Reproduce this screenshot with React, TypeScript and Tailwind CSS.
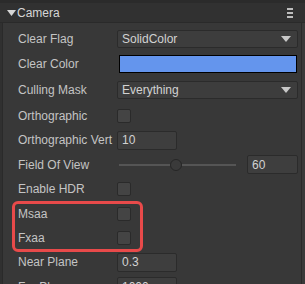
import React from 'react'

const font = { fontFamily: '"Liberation Sans", Arial, sans-serif' }

function Label({ children }: { children: React.ReactNode }) {
  return <div className="w-[99px] shrink-0 text-[12px] text-[#c4c4c4] whitespace-nowrap">{children}</div>
}

function Row({ h, label, children }: { h: string; label: string; children?: React.ReactNode }) {
  return (
    <div className={`flex items-center ${h}`}>
      <Label>{label}</Label>
      {children}
    </div>
  )
}

function Caret() {
  return (
    <svg width="10" height="6" viewBox="0 0 10 6" className="ml-auto">
      <path d="M0 0 L10 0 L5 6 Z" fill="#c8c8c8" />
    </svg>
  )
}

function Select({ value }: { value: string }) {
  return (
    <div className="flex items-center w-[181px] h-[18px] pl-[4px] pr-[6px] bg-[#3d3d3d] border border-[#2b2b2b] rounded-[2px] text-[12px] text-[#d2d2d2]">
      <span>{value}</span>
      <Caret />
    </div>
  )
}

function Check() {
  return <div className="w-[14px] h-[14px] bg-[#444444] border border-[#2a2a2a] rounded-[2px]" />
}

function NumInput({ value, w }: { value: string; w: string }) {
  return (
    <div className={`flex items-center ${w} h-[19px] pl-[4px] bg-[#3e3e3e] border border-[#2b2b2b] rounded-[2px] text-[12px] text-[#d2d2d2]`}>
      {value}
    </div>
  )
}

export default function App() {
  return (
    <div className="w-[305px] h-[284px] overflow-hidden bg-[#383838] flex flex-col" style={font}>
      {/* top strip */}
      <div className="h-[3px] bg-[#2b2b2b] shrink-0" />
      {/* header */}
      <div className="h-[20px] shrink-0 flex items-center bg-[#313131] border-b border-[#2a2a2a] pl-[7px] pr-[12px]">
        <svg width="9" height="6" viewBox="0 0 9 6" className="mr-[1px]">
          <path d="M0 0 L9 0 L4.5 6 Z" fill="#d6d6d6" />
        </svg>
        <span className="text-[12px] text-[#d6d6d6]">Camera</span>
        <div className="ml-auto flex flex-col gap-[2px]">
          <div className="w-[6px] h-[2px] bg-[#bdbdbd]" />
          <div className="w-[6px] h-[2px] bg-[#bdbdbd]" />
          <div className="w-[6px] h-[2px] bg-[#bdbdbd]" />
        </div>
      </div>
      {/* body */}
      <div className="flex-1 flex">
        <div className="w-[2px] bg-[#303030] shrink-0" />
        <div className="w-[1px] bg-[#2a2a2a] shrink-0" />
        <div className="flex-1 flex flex-col pl-[15px] pt-[4px]">
          <Row h="h-[24px]" label="Clear Flag"><Select value="SolidColor" /></Row>
          <Row h="h-[25px]" label="Clear Color">
            <div className="ml-[2px] w-[178px] h-[18px] bg-[#6495ed] border border-black" />
          </Row>
          <Row h="h-[27px]" label="Culling Mask"><Select value="Everything" /></Row>
          <Row h="h-[25px]" label="Orthographic"><Check /></Row>
          <Row h="h-[24px]" label="Orthographic Vert"><NumInput value="10" w="w-[60px]" /></Row>
          <Row h="h-[25px]" label="Field Of View">
            <div className="relative w-[117px] h-[12px] ml-[2px] flex items-center">
              <div className="w-full h-[2px] bg-[#555555]" />
              <div className="absolute left-[51px] top-0 w-[12px] h-[12px] rounded-full bg-[#3a3a3a] border border-[#262626]" />
            </div>
            <div className="ml-[11px]"><NumInput value="60" w="w-[51px]" /></div>
          </Row>
          <Row h="h-[24px]" label="Enable HDR"><Check /></Row>
          <div className="relative">
            <Row h="h-[25px]" label="Msaa"><Check /></Row>
            <Row h="h-[24px]" label="Fxaa"><Check /></Row>
            <div className="absolute left-[-6px] top-0 w-[131px] h-[51px] border-[3px] border-[#e84a4a] rounded-[6px]" />
          </div>
          <Row h="h-[24px]" label="Near Plane"><NumInput value="0.3" w="w-[60px]" /></Row>
          <Row h="h-[25px]" label="Far Plane"><NumInput value="1000" w="w-[60px]" /></Row>
        </div>
        <div className="w-[1px] bg-[#2a2a2a] shrink-0 ml-[3px]" />
        <div className="w-[3px] bg-[#3a3a3a] shrink-0" />
      </div>
    </div>
  )
}
